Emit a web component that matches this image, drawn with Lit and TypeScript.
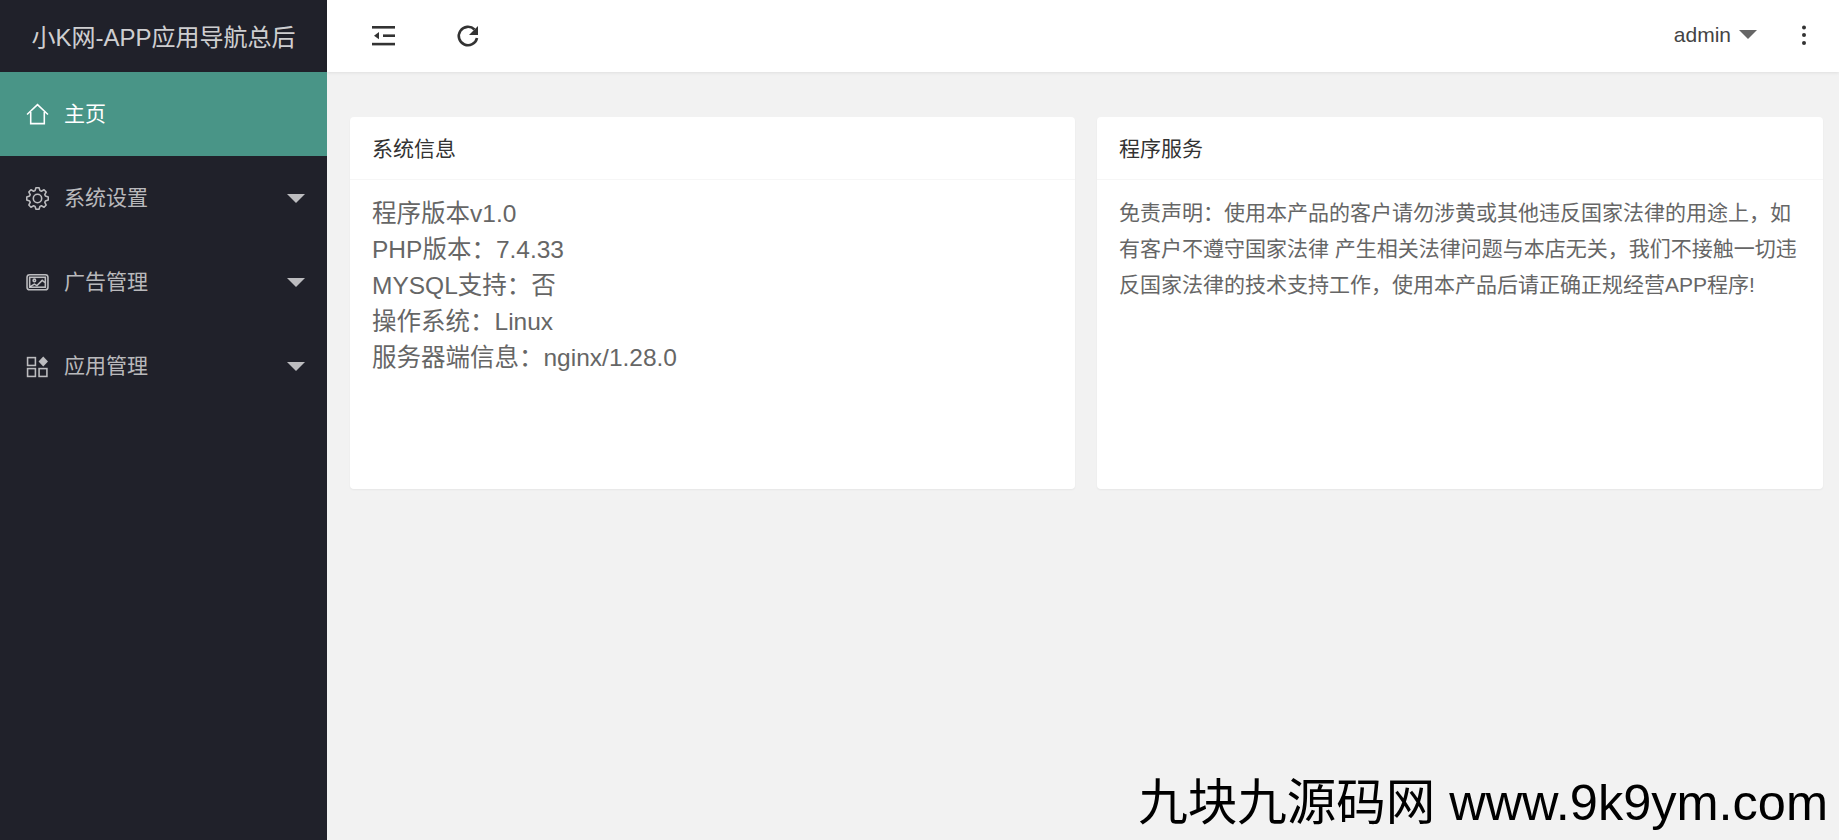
import { LitElement, html, css, svg } from "lit";
import { customElement } from "lit/decorators.js";

const gearPath = () => {
  const pts: string[] = [];
  for (let i = 0; i < 8; i++) {
    const a = (i * Math.PI) / 4;
    for (const [r, d] of [[7.9, -0.3], [10.4, -0.14], [10.4, 0.14], [7.9, 0.3]]) {
      const x = 11 + r * Math.cos(a + d);
      const y = 11 + r * Math.sin(a + d);
      pts.push(`${x.toFixed(2)} ${y.toFixed(2)}`);
    }
  }
  return `M${pts.join("L")}Z`;
};

const icons = {
  home: svg`<path d="M1 11 11 1.5 21 11" /><path d="M4.5 8.5v11.2h13V8.5" />`,
  gear: svg`<path stroke-linejoin="round" d="${gearPath()}" /><circle cx="11" cy="11" r="4" />`,
  image: svg`<rect x="1" y="3.5" width="20" height="14.5" rx="2.5" /><rect x="3.5" y="6" width="15" height="9.5" /><circle cx="8" cy="9" r="1.2" /><path d="m4 15 4-2.5 2.5 1.5 5-5 2.5 2" />`,
  apps: svg`<rect x="1.5" y="2.5" width="7.5" height="7.5" /><rect x="1.5" y="13" width="7.5" height="7.5" /><rect x="12.5" y="13" width="7.5" height="7.5" /><path class="fill" d="m16.5 1.5 4.5 4.7-4.5 4.7-4.5-4.7z" />`,
};

@customElement("app-root")
export class AppRoot extends LitElement {
  static styles = css`
    :host {
      display: block;
      height: 100vh;
      overflow: hidden;
      font-family: "Liberation Sans", "Noto Sans CJK SC", sans-serif;
      background: #f2f2f2;
    }
    .shell {
      display: flex;
      height: 100%;
      position: relative;
    }
    .side {
      width: 327px;
      flex: none;
      background: #20212a;
      color: rgba(255, 255, 255, 0.7);
    }
    .logo {
      height: 72px;
      display: flex;
      align-items: center;
      justify-content: center;
      padding-bottom: 2px;
      box-sizing: border-box;
      font-size: 24px;
      color: rgba(255, 255, 255, 0.8);
    }
    .item {
      height: 84px;
      display: flex;
      align-items: center;
      padding: 0 22px 0 26px;
      gap: 15px;
      font-size: 21px;
    }
    .item.active {
      background: #499587;
      color: #fff;
    }
    .item .label {
      flex: 1;
      padding-bottom: 4px;
    }
    .item svg {
      width: 23px;
      height: 23px;
      fill: none;
      stroke: currentColor;
      stroke-width: 1.5;
      flex: none;
    }
    .item svg .fill {
      fill: currentColor;
      stroke: none;
    }
    .tri {
      width: 0;
      height: 0;
      border-style: solid;
      border-width: 9px 9px 0;
      border-color: currentColor transparent transparent;
      flex: none;
    }
    .main {
      flex: 1;
      min-width: 0;
      display: flex;
      flex-direction: column;
    }
    .top {
      height: 72px;
      flex: none;
      background: #fff;
      box-shadow: 0 1px 3px rgba(0, 0, 0, 0.08);
      display: flex;
      align-items: center;
      padding: 0 32px 0 45px;
      color: #333;
    }
    .tools {
      display: flex;
      align-items: center;
      gap: 61px;
      flex: 1;
    }
    .shrink {
      display: block;
      width: 23px;
      height: 24px;
      fill: #333;
      flex: none;
    }
    .refresh {
      display: block;
      width: 24px;
      height: 24px;
      flex: none;
    }
    .user {
      display: flex;
      align-items: center;
      gap: 8px;
      font-size: 21px;
      margin-right: 44px;
      color: #444;
      padding-bottom: 2px;
    }
    .user .tri {
      color: #666;
      margin-top: -1px;
    }
    .more {
      display: block;
      width: 6px;
      height: 24px;
      fill: #333;
    }
    .cards {
      display: grid;
      grid-template-columns: 725px 726px;
      gap: 22px;
      padding: 45px 16px 0 23px;
    }
    .card {
      height: 372px;
      background: #fff;
      border-radius: 4px;
      box-shadow: 0 1px 2px rgba(0, 0, 0, 0.05);
    }
    .head {
      height: 63px;
      box-sizing: border-box;
      border-bottom: 1px solid #f6f6f6;
      display: flex;
      align-items: center;
      padding: 0 22px 2px;
      font-size: 21px;
      color: #333;
    }
    .body {
      padding: 15px 22px;
      line-height: 36px;
      color: #666;
    }
    .body.big {
      font-size: 24.5px;
      padding-top: 16px;
    }
    .body.small {
      font-size: 21px;
    }
    .mark {
      position: absolute;
      right: 11px;
      bottom: 7px;
      font-size: 50.5px;
      line-height: 60px;
      color: #000;
      white-space: pre;
    }
    .mark .cjk {
      font-size: 49.5px;
    }
  `;

  private item(icon: keyof typeof icons, label: string, active = false) {
    return html`<div class="item ${active ? "active" : ""}">
      <svg viewBox="0 0 22 22">${icons[icon]}</svg>
      <span class="label">${label}</span>
      ${active ? "" : html`<span class="tri"></span>`}
    </div>`;
  }

  render() {
    return html`<div class="shell">
      <aside class="side">
        <div class="logo">小K网-APP应用导航总后</div>
        ${this.item("home", "主页", true)}
        ${this.item("gear", "系统设置")}
        ${this.item("image", "广告管理")}
        ${this.item("apps", "应用管理")}
      </aside>
      <div class="main">
        <header class="top">
          <div class="tools">
            <svg class="shrink" viewBox="0 0 23 24">
              <rect x="0" y="2" width="23" height="2.6" />
              <rect x="0" y="18.8" width="23" height="2.6" />
              <rect x="11" y="10.4" width="12" height="2.6" />
              <path d="M2 11.7l5-3.6v7.2z" />
            </svg>
            <svg class="refresh" viewBox="0 0 24 24">
              <path d="M18.5 5.5A9.2 9.2 0 1 0 21 14" fill="none" stroke="#333" stroke-width="2.6" />
              <path d="M22 2v9h-9z" fill="#333" />
            </svg>
          </div>
          <div class="user">admin <span class="tri"></span></div>
          <svg class="more" viewBox="0 0 6 24">
            <circle cx="3" cy="3.5" r="2" />
            <circle cx="3" cy="11" r="2" />
            <circle cx="3" cy="19" r="2" />
          </svg>
        </header>
        <div class="cards">
          <section class="card">
            <div class="head">系统信息</div>
            <div class="body big">
              程序版本v1.0<br />PHP版本：7.4.33<br />MYSQL支持：否<br />操作系统：Linux<br />服务器端信息：nginx/1.28.0
            </div>
          </section>
          <section class="card">
            <div class="head">程序服务</div>
            <div class="body small">
              免责声明：使用本产品的客户请勿涉黄或其他违反国家法律的用途上，如有客户不遵守国家法律 产生相关法律问题与本店无关，我们不接触一切违反国家法律的技术支持工作，使用本产品后请正确正规经营APP程序!
            </div>
          </section>
        </div>
      </div>
      <div class="mark"><span class="cjk">九块九源码网</span> www.9k9ym.com</div>
    </div>`;
  }
}
